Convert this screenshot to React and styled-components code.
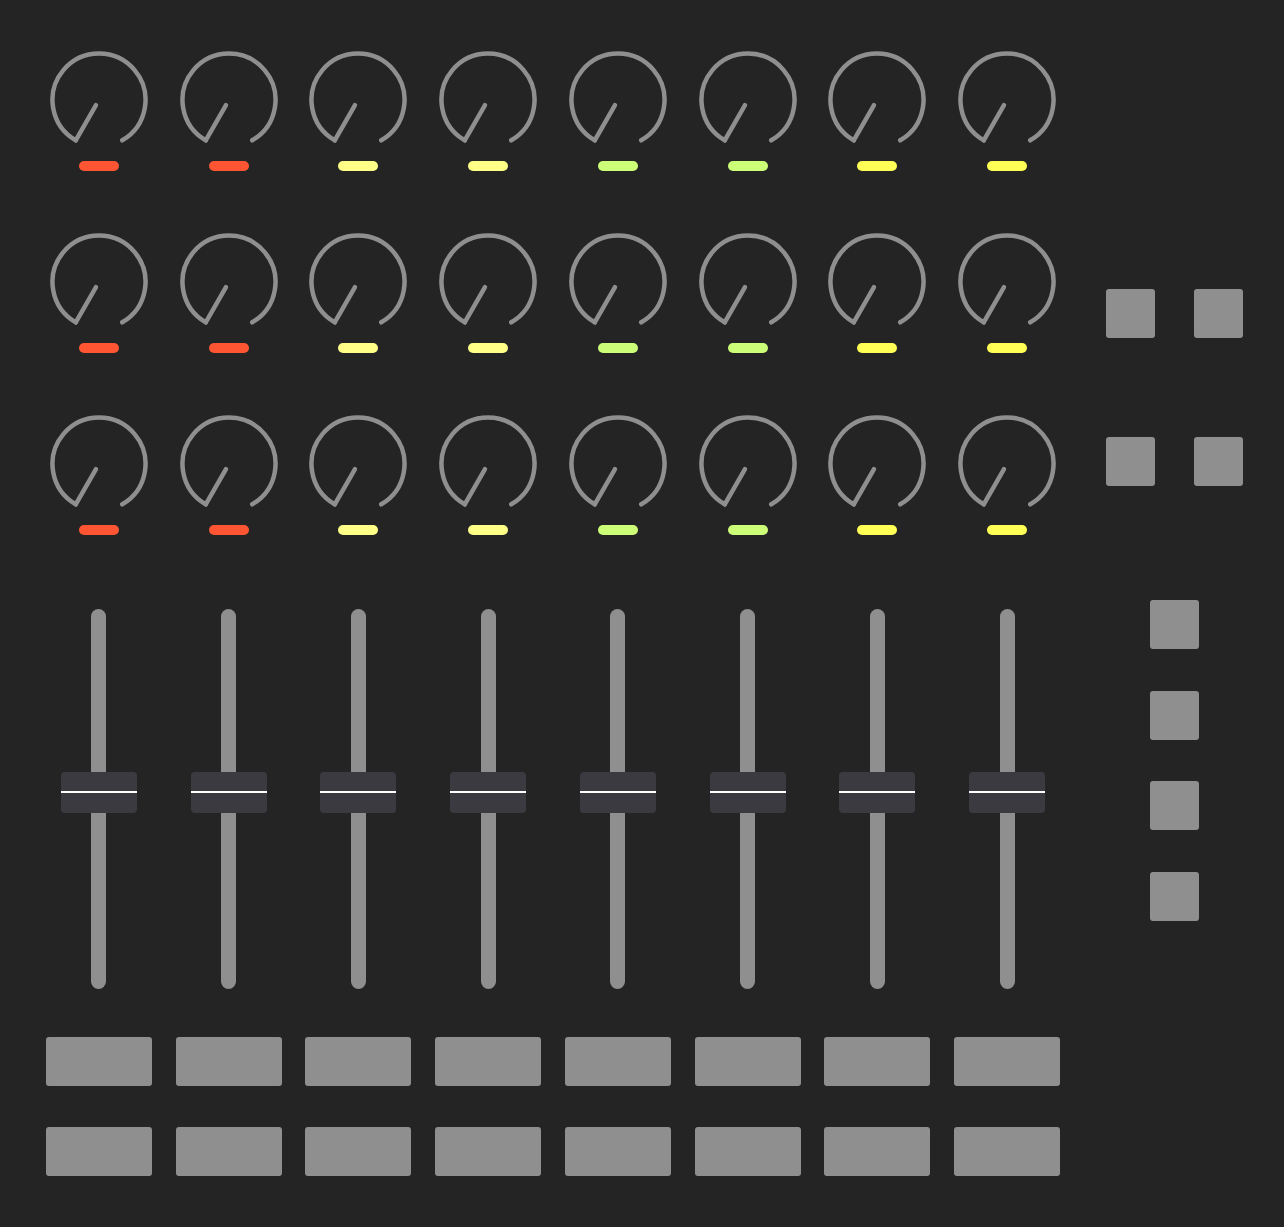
import React from "react";
import styled, { createGlobalStyle } from "styled-components";

const Global = createGlobalStyle`
  html, body { margin: 0; padding: 0; background: #242424; }
  body { font-family: "Liberation Sans", Arial, sans-serif; }
`;

const Surface = styled.div`
  width: 1284px;
  height: 1227px;
  background: #242424;
  display: flex;
  box-sizing: border-box;
  padding-left: 34px;
`;

const Main = styled.div`
  width: 1038px;
  display: flex;
  flex-direction: column;
  padding-top: 50px;
`;

const Grid = styled.div`
  display: grid;
  grid-template-columns: repeat(8, 1fr);
  margin-top: ${(p) => p.$mt || 0}px;
  margin-bottom: ${(p) => p.$mb || 0}px;
`;

const KnobCell = styled.div`
  display: flex;
  flex-direction: column;
  align-items: center;
  gap: 11px;
  height: 182px;
`;

const KnobSvg = styled.svg`
  display: block;
  width: 100px;
  height: 100px;
`;

const Led = styled.div`
  width: 40px;
  height: 10px;
  border-radius: 5px;
  background: ${(p) => p.$color};
`;

const SliderCell = styled.div`
  display: flex;
  justify-content: center;
  height: 380px;
`;

const Track = styled.div`
  position: relative;
  width: 15px;
  height: 380px;
  border-radius: 7.5px;
  background: #8f8f8f;
`;

const Thumb = styled.div`
  position: absolute;
  left: 50%;
  top: 163px;
  width: 76px;
  height: 41px;
  margin-left: -38px;
  border-radius: 4px;
  background: #3a3a40;
  display: flex;
  align-items: center;
  &::after {
    content: "";
    display: block;
    width: 100%;
    height: 2.5px;
    margin-top: -1px;
    background: #ffffff;
  }
`;

const PadCell = styled.div`
  display: flex;
  justify-content: center;
`;

const Pad = styled.div`
  width: ${(p) => p.$w || 49}px;
  height: 49px;
  border-radius: 3px;
  background: #8f8f8f;
`;

const Side = styled.div`
  width: 204px;
  display: flex;
  flex-direction: column;
  align-items: center;
`;

const SquareGrid = styled.div`
  margin-top: 289px;
  display: grid;
  grid-template-columns: 49px 49px;
  column-gap: 39px;
  row-gap: 99px;
`;

const SquareColumn = styled.div`
  margin-top: 114px;
  height: 321px;
  display: flex;
  flex-direction: column;
  justify-content: space-between;
`;

const LED_COLORS = [
  "#ff5533",
  "#ff5533",
  "#ffff88",
  "#ffff88",
  "#ccff77",
  "#ccff77",
  "#ffff55",
  "#ffff55",
];

const Knob = () => {
  const cx = 50;
  const cy = 50;
  const r = 46.5;
  const a0 = (120 * Math.PI) / 180;
  const a1 = (60 * Math.PI) / 180;
  const x0 = cx + r * Math.cos(a0);
  const y0 = cy + r * Math.sin(a0);
  const x1 = cx + r * Math.cos(a1);
  const y1 = cy + r * Math.sin(a1);
  const pi = 0.13 * r;
  const px = cx + pi * Math.cos(a0);
  const py = cy + pi * Math.sin(a0);
  return (
    <KnobSvg viewBox="0 0 100 100">
      <path
        d={`M ${x0} ${y0} A ${r} ${r} 0 1 1 ${x1} ${y1}`}
        fill="none"
        stroke="#8f8f8f"
        strokeWidth="4.5"
        strokeLinecap="round"
      />
      <line
        x1={px}
        y1={py}
        x2={x0}
        y2={y0}
        stroke="#8f8f8f"
        strokeWidth="4.5"
        strokeLinecap="round"
      />
    </KnobSvg>
  );
};

const cols = [0, 1, 2, 3, 4, 5, 6, 7];

export default function App() {
  return (
    <>
      <Global />
      <Surface>
        <Main>
          {[0, 1, 2].map((row) => (
            <Grid key={row}>
              {cols.map((c) => (
                <KnobCell key={c}>
                  <Knob />
                  <Led $color={LED_COLORS[c]} />
                </KnobCell>
              ))}
            </Grid>
          ))}
          <Grid $mt={13} $mb={48}>
            {cols.map((c) => (
              <SliderCell key={c}>
                <Track>
                  <Thumb />
                </Track>
              </SliderCell>
            ))}
          </Grid>
          <Grid $mb={41}>
            {cols.map((c) => (
              <PadCell key={c}>
                <Pad $w={106} />
              </PadCell>
            ))}
          </Grid>
          <Grid>
            {cols.map((c) => (
              <PadCell key={c}>
                <Pad $w={106} />
              </PadCell>
            ))}
          </Grid>
        </Main>
        <Side>
          <SquareGrid>
            <Pad />
            <Pad />
            <Pad />
            <Pad />
          </SquareGrid>
          <SquareColumn>
            <Pad />
            <Pad />
            <Pad />
            <Pad />
          </SquareColumn>
        </Side>
      </Surface>
    </>
  );
}
